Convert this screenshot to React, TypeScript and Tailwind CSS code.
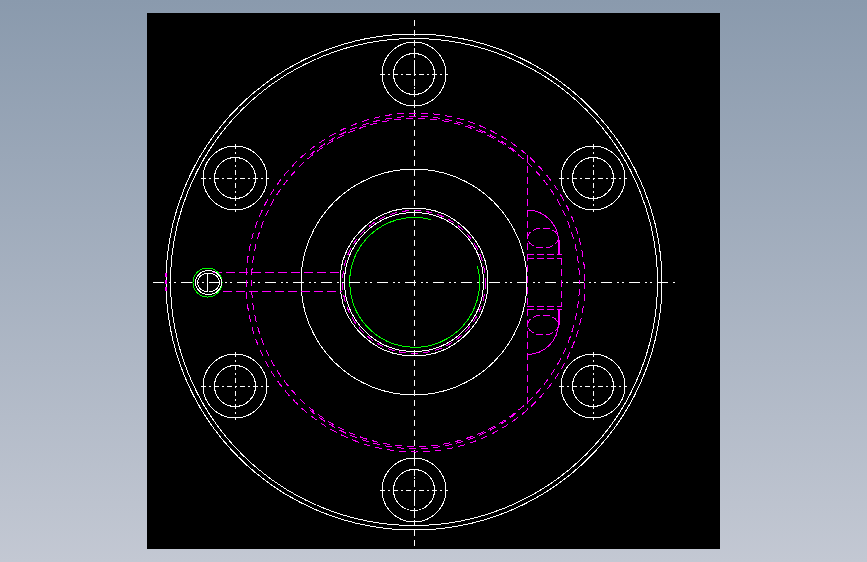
export default function App() {
  const bolts: [number, number][] = [
    [414, 74],
    [235, 178],
    [593, 178],
    [235, 386],
    [593, 386],
    [414, 490],
  ];
  const W = "#ffffff";
  const M = "#ff00ff";
  const G = "#00ff00";
  return (
    <div className="h-[562px] w-[867px] overflow-hidden bg-linear-to-b from-[#8a9aad] to-[#c3c8d3] pl-[147px] pt-[13px]">
      <div className="h-[536px] w-[573px] bg-black">
        <svg
          width="573"
          height="536"
          viewBox="147 13 573 536"
          fill="none"
          shapeRendering="crispEdges"
          strokeWidth="1"
          className="block"
        >
          {/* outer flange */}
          <circle cx="414" cy="282" r="248" stroke={W} />
          <circle cx="414" cy="282" r="243.5" stroke={W} />
          {/* hub */}
          <circle cx="414" cy="282" r="113" stroke={W} />
          <circle cx="414" cy="282" r="71.5" stroke={M} strokeDasharray="7 5" />
          <circle cx="414" cy="282" r="74" stroke={W} />
          <circle cx="414" cy="282" r="69.5" stroke={W} />
          <path d="M477.5 266 A65 65 0 1 1 431 219.5" stroke={G} />
          {/* bolt holes */}
          {bolts.map(([x, y]) => (
            <g key={`${x}-${y}`}>
              <circle cx={x} cy={y} r="32" stroke={W} />
              <circle cx={x} cy={y} r="20.5" stroke={W} />
              <path
                d={`M${x - 34} ${y + 0.5} H${x + 34}`}
                stroke={W}
                strokeDasharray="5 3 2 3"
              />
              <path
                d={`M${x + 0.5} ${y - 34} V${y + 34}`}
                stroke={W}
                strokeDasharray="5 3 2 3"
              />
            </g>
          ))}
          {/* main centre lines */}
          <path d="M153 282.5 H676" stroke={W} strokeDasharray="11 5 2 3 2 5" />
          <path d="M414.5 20 V546" stroke={W} strokeDasharray="6 4" />
          {/* dashed pitch rings */}
          <circle cx="415.5" cy="282.5" r="169.5" stroke={M} strokeDasharray="7 5" />
          <circle cx="415.5" cy="282.5" r="164" stroke={M} strokeDasharray="7 5" strokeDashoffset="5" />
          <path d="M310 155 A162 162 0 0 1 520 155" stroke={M} strokeDasharray="7 5" />
          <path d="M310 410 A162 162 0 0 0 520 410" stroke={M} strokeDasharray="7 5" />
          {/* keyway at right */}
          <path d="M527.5 155 V410" stroke={M} strokeDasharray="7 4" />
          <path d="M561.5 258 V306" stroke={M} strokeDasharray="7 4" />
          <path
            d="M527 254.5 H562 M527 258.5 H562 M527 306.5 H562 M527 309.5 H562"
            stroke={M}
            strokeDasharray="7 3"
          />
          <path d="M527 210 A31.5 31.5 0 0 1 558.5 241.5 V254" stroke={M} />
          <path d="M527 354.5 A31.5 31.5 0 0 0 558.5 323 V310" stroke={M} />
          <path d="M558.5 240 V254 M558.5 310 V325" stroke={M} strokeWidth="2" />
          <ellipse cx="543" cy="238" rx="15.5" ry="10" stroke={M} strokeDasharray="7 3" />
          <ellipse cx="543" cy="325" rx="15.5" ry="10" stroke={M} strokeDasharray="7 3" />
          {/* left port */}
          <path d="M213 272.5 H342 M223 291.5 H342" stroke={M} strokeDasharray="9 4" />
          <path d="M166 273 V291" stroke={M} strokeDasharray="4 3" strokeWidth="2" />
          <ellipse cx="207.5" cy="282.5" rx="14.5" ry="14.5" stroke={G} />
          <ellipse cx="208.5" cy="282.5" rx="13" ry="12" stroke={W} />
          <ellipse cx="208.5" cy="282.5" rx="11" ry="9.5" stroke={W} />
          <path d="M207.5 273 V292" stroke={W} />
        </svg>
      </div>
    </div>
  );
}
